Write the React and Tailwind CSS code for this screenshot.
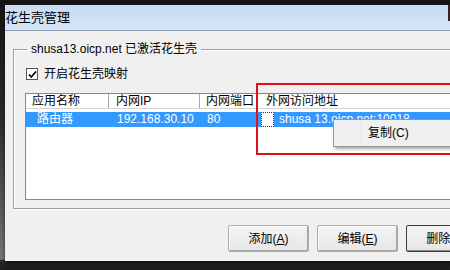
const font = { fontFamily: '"Liberation Sans", "Noto Sans CJK SC", sans-serif' };

function Btn({ label, keyChar, primary }) {
  return (
    <button
      className={
        "w-[81px] h-[27px] shrink-0 rounded-[2px] text-[12px] text-black flex items-center justify-center bg-[linear-gradient(#f4f4f4,#e6e6e6)] " +
        (primary
          ? "border border-[#3c3c3c] shadow-[inset_-1px_-1px_0_#8a8a8a]"
          : "border border-[#adadad] shadow-[inset_-1px_-1px_0_#a4a4a4,inset_1px_1px_0_#fdfdfd]")
      }
    >
      {label}(<u>{keyChar}</u>)
    </button>
  );
}

export default function App() {
  return (
    <div
      className="relative w-[450px] h-[270px] overflow-hidden pt-[5px] pl-[5px] bg-[linear-gradient(#141414,#2c2c2c_45%,#5e5e5e_80%,#777_96%,#2a2a2a_96.5%,#1c1c1c)]"
      style={font}
    >
      {/* window */}
      <div className="w-[460px] h-[256px] flex flex-col bg-[#f0f0f0] shadow-[0_3px_4px_rgba(0,0,0,0.6)]">
        {/* title bar */}
        <div className="relative h-[26px] flex items-center bg-[linear-gradient(#c7dbf3,#d6e5f7)] border-b border-[#8e9cae]">
          <span className="text-[13px] text-black leading-none">花生壳管理</span>
          <div className="absolute right-[13px] top-0 w-[4px] h-[16px] bg-[#3a2224]" />
        </div>

        {/* body */}
        <div className="flex-1 flex flex-col pl-[8px] pt-[10px]">
          <fieldset className="h-[168px] border border-[#a0a0a0] shadow-[1px_1px_0_#fff,inset_1px_1px_0_#fff] flex flex-col">
            <legend className="ml-[13px] px-[4px] text-[12px] leading-[16px] text-black">
              shusa13.oicp.net 已激活花生壳
            </legend>

            {/* checkbox */}
            <label className="flex items-center mt-[9px] ml-[12px] gap-[6px] text-[12px] leading-[16px] text-black">
              <span className="w-[12px] h-[12px] border border-[#555] bg-white flex items-center justify-center">
                <svg width="9" height="9" viewBox="0 0 9 9">
                  <path d="M1 4.5 L3.3 7 L8 1.5" stroke="#000" strokeWidth="1.8" fill="none" />
                </svg>
              </span>
              开启花生壳映射
            </label>

            {/* list view */}
            <div className="mt-[11px] ml-[11px] h-[107px] border border-[#828790] bg-white flex flex-col text-[12px] leading-[15px]">
              <div className="flex h-[15px] border-b border-[#d5d5d5] text-black">
                <div className="w-[83px] pl-[6px] border-r border-[#a8a8a8]">应用名称</div>
                <div className="w-[91px] pl-[7px] border-r border-[#a8a8a8]">内网IP</div>
                <div className="w-[58px] pl-[6px] border-r border-[#a8a8a8]">内网端口</div>
                <div className="flex-1 pl-[8px]">外网访问地址</div>
              </div>
              <div className="flex h-[15px] mt-[3px] text-white">
                <div className="w-[83px] pl-[11px] bg-[#3399ff]">路由器</div>
                <div className="w-[91px] pl-[8px] bg-[#3399ff]">192.168.30.10</div>
                <div className="w-[58px] pl-[7px] bg-[#3399ff]">80</div>
                <div className="w-[3px] bg-[#3399ff]" />
                <div className="w-[13px] bg-white border border-dotted border-[#333]" />
                <div className="flex-1 pl-[5px] bg-[#3399ff] whitespace-nowrap">shusa 13.oicp.net:10018</div>
              </div>
            </div>
          </fieldset>

          {/* buttons */}
          <div className="flex gap-[8px] mt-[16px] ml-[215px]">
            <Btn label="添加" keyChar="A" />
            <Btn label="编辑" keyChar="E" />
            <Btn label="删除" keyChar="D" primary />
          </div>
        </div>
      </div>

      {/* context menu */}
      <div className="absolute left-[333px] top-[119px] w-[130px] h-[28px] bg-[#f0f0f0] border border-[#979797] shadow-[2px_2px_3px_rgba(0,0,0,0.35)] flex items-center">
        <div className="w-[28px] h-full border-r border-[#e2e3e3]" />
        <span className="pl-[6px] text-[12px] text-black">复制(C)</span>
      </div>

      {/* red annotation */}
      <div className="absolute left-[256px] top-[83px] w-[210px] h-[72px] border-2 border-[#e0101a]" />
    </div>
  );
}
